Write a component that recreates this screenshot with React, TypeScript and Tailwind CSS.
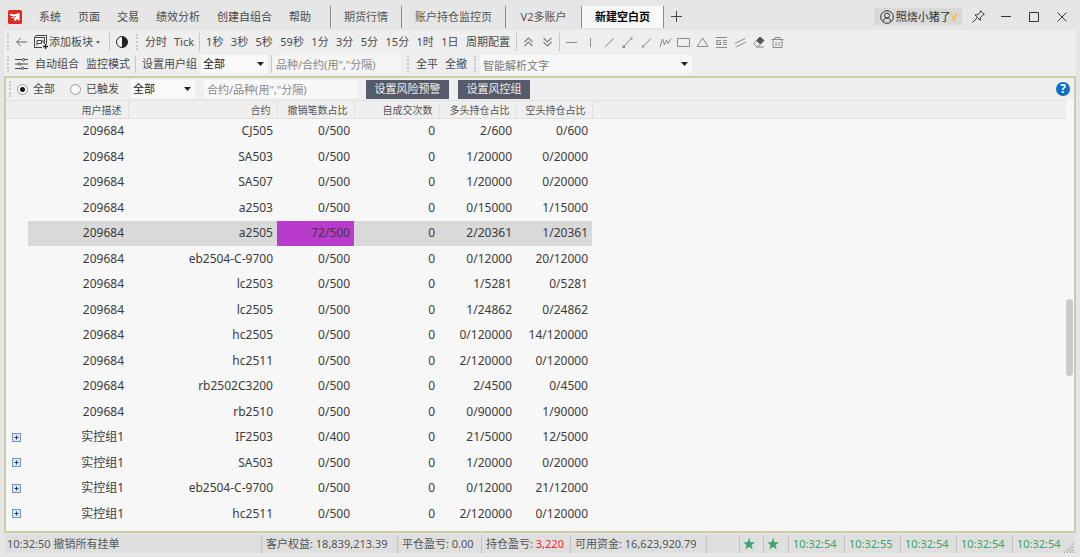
import { ReactNode, useState } from "react";
import clsx from "clsx";

type Row = {
  user: string
  contract: string
  cancel: string
  self: string
  long: string
  short: string
}

const menus = ["系统", "页面", "交易", "绩效分析", "创建自组合", "帮助"]

const tabs = [
  { label: "期货行情", width: "w-[71px]" },
  { label: "账户持仓监控页", width: "w-[104px]" },
  { label: "V2多账户", width: "w-[76px]" },
  { label: "新建空白页", width: "w-[83px]" },
]

const periods = ["1秒", "3秒", "5秒", "59秒", "1分", "3分", "5分", "15分", "1时", "1日", "周期配置"]

const columns = ["用户描述", "合约", "撤销笔数占比", "自成交次数", "多头持仓占比", "空头持仓占比"]

const data: Row[] = [
  ["209684", "CJ505", "0/500", "0", "2/600", "0/600"],
  ["209684", "SA503", "0/500", "0", "1/20000", "0/20000"],
  ["209684", "SA507", "0/500", "0", "1/20000", "0/20000"],
  ["209684", "a2503", "0/500", "0", "0/15000", "1/15000"],
  ["209684", "a2505", "72/500", "0", "2/20361", "1/20361"],
  ["209684", "eb2504-C-9700", "0/500", "0", "0/12000", "20/12000"],
  ["209684", "lc2503", "0/500", "0", "1/5281", "0/5281"],
  ["209684", "lc2505", "0/500", "0", "1/24862", "0/24862"],
  ["209684", "hc2505", "0/500", "0", "0/120000", "14/120000"],
  ["209684", "hc2511", "0/500", "0", "2/120000", "0/120000"],
  ["209684", "rb2502C3200", "0/500", "0", "2/4500", "0/4500"],
  ["209684", "rb2510", "0/500", "0", "0/90000", "1/90000"],
  ["实控组1", "IF2503", "0/400", "0", "21/5000", "12/5000"],
  ["实控组1", "SA503", "0/500", "0", "1/20000", "0/20000"],
  ["实控组1", "eb2504-C-9700", "0/500", "0", "0/12000", "21/12000"],
  ["实控组1", "hc2511", "0/500", "0", "2/120000", "0/120000"],
].map(([user, contract, cancel, self, long, short]) => ({ user, contract, cancel, self, long, short }))

const drawTools: { name: string; shape: ReactNode }[] = [
  { name: "水平线", shape: <path d="M1 6.500h11" /> },
  { name: "垂直线", shape: <path d="M6.500 2v9" /> },
  { name: "直线", shape: <path d="M2 11l9-9" /> },
  { name: "线段", shape: <><path d="M3 10.500l7-8" /><path d="M1.500 9.500h2.500V12H1.500zM9.500 1.500h2v2h-2z" fill="currentColor" stroke="none" /></> },
  { name: "射线", shape: <><path d="M3 10.500l8-8" /><path d="M2 9.500h2v2H2z" fill="currentColor" stroke="none" /></> },
  { name: "波浪线", shape: <path d="M1 11L3.500 3l2 6 2-5 1.500 3.500L12 2.500" /> },
  { name: "矩形", shape: <path d="M.5 2.500h12v8H.5z" /> },
  { name: "三角形", shape: <path d="M6.500 2L12 10.500H1z" /> },
  { name: "文字", shape: <><path d="M1 1.500h11M1 11.500h11M8 4.500h4M8 6.500h4M8 8.500h4" /><path d="M6 4.500H2v4h3.500V6.500H4" strokeWidth="1.200" /></> },
  { name: "平行线", shape: <path d="M1 7.500l10-5M2 11l10-5" /> },
  { name: "橡皮", shape: <><path d="M4.500 4.500L8 1l4 3.500L8.500 8z" fill="#555" stroke="#555" /><path d="M4.500 4.500L1.500 7.500 4.500 10.500h2l2-2.500M4 11h8" /></> },
  { name: "删除", shape: <path d="M.5 3.500h12M4 3.500v-2h5v2M2 4v7.500h9V4M5 6v4M8 6v4" /> },
]

const Grip = () => <span className="h-4 w-0.5 shrink-0 border-l-2 border-dotted border-[#cacaca]" />

const Divider = () => <span className="h-[18px] w-px shrink-0 bg-[#c6c6c6]" />

const Caret = () => (
  <svg className="pointer-events-none absolute right-1 top-[7px] h-1 w-[7px]" viewBox="0 0 7 4">
    <path d="M0 0h7L3.500 4z" fill="#222" />
  </svg>
)

const ToolButton = ({ children }: { children: ReactNode }) => (
  <button type="button" className="shrink-0 whitespace-nowrap hover:text-black">{children}</button>
)

const GroupSelect = ({ label, className }: { label: string; className: string }) => (
  <div className={clsx("relative shrink-0", className)}>
    <select aria-label={label} className="block h-[18px] w-full appearance-none bg-[#f9f9f9] pl-0.5 text-[11px] leading-[18px] text-[#222] outline-none">
      <option>全部</option>
    </select>
    <Caret />
  </div>
)

const TitleBar = () => {
  const [active, setActive] = useState("新建空白页")

  return (
    <header className="flex h-[30px] items-center pt-[3px]">
      <svg className="ml-2 h-3.5 w-3.5 shrink-0" viewBox="0 0 14 14">
        <rect width="14" height="14" rx="1.500" fill="#dd2a22" />
        <path d="M1.500 3.500l4.500 1L11.500 3v8L9 9 7 11.500 6 9 3.500 8z" fill="#fff" />
        <path d="M3 10.500l5-4.500M1.500 6.500h4" stroke="#dd2a22" />
      </svg>
      <nav className="ml-[17px] flex w-[291px] shrink-0 gap-[17px]">
        {menus.map((item) => <button type="button" key={item} className="whitespace-nowrap">{item}</button>)}
      </nav>
      <div className="flex h-[22px] shrink-0" role="tablist">
        {tabs.map(({ label, width }) => (
          <button
            type="button"
            role="tab"
            key={label}
            aria-selected={active === label}
            onClick={() => setActive(label)}
            className={clsx(
              "whitespace-nowrap border-l border-[#8c8c8c]",
              width,
              active === label ? "border-r bg-[#f8f8f8] font-bold text-black" : "text-[#555]",
            )}
          >
            {label}
          </button>
        ))}
      </div>
      <button type="button" aria-label="新建页面" className="ml-[7px]">
        <svg className="h-[11px] w-[11px]" viewBox="0 0 11 11" stroke="#444" fill="none"><path d="M5.500 0v11M0 5.500h11" /></svg>
      </button>
      <div className="ml-auto flex shrink-0 items-center pr-[13px] text-[#333]">
        <button type="button" className="flex h-[17px] items-center bg-[#d9d9d9] pl-1.5 pr-1 leading-[17px]">
          <svg className="mr-0.5 h-3.5 w-3.5" viewBox="0 0 14 14" fill="none" stroke="currentColor">
            <circle cx="7" cy="7" r="6.300" />
            <circle cx="7" cy="5.500" r="2.500" />
            <path d="M3.500 11.500c0-2.500 1.500-3.500 3.500-3.500s3.500 1 3.500 3.500" />
          </svg>
          照烧小猪了<span className="font-bold text-[#efc24c]">V</span>
        </button>
        <button type="button" aria-label="置顶" className="ml-2.5">
          <svg className="h-[13px] w-[13px]" viewBox="0 0 13 13" fill="none" stroke="currentColor">
            <path d="M8.500.700l3.800 3.800-1.300.300-2.500 2.500-.3 3L3 5l3-.3 2.300-2.500zM5.500 7.500L.5 12.500" />
          </svg>
        </button>
        <button type="button" aria-label="最小化" className="ml-4">
          <svg className="h-2.5 w-2.5" viewBox="0 0 10 10" stroke="currentColor"><path d="M0 4.500h10" /></svg>
        </button>
        <button type="button" aria-label="最大化" className="ml-[18px]">
          <svg className="h-2.5 w-2.5" viewBox="0 0 10 10" fill="none" stroke="currentColor"><path d="M.5.5h9v9h-9z" /></svg>
        </button>
        <button type="button" aria-label="关闭" className="ml-[18px]">
          <svg className="h-2.5 w-2.5" viewBox="0 0 10 10" stroke="currentColor"><path d="M.5.5l9 9M9.500.5l-9 9" /></svg>
        </button>
      </div>
    </header>
  )
}

const ChartToolbar = () => (
  <div className="flex h-6 items-center pl-[3px]">
    <Grip />
    <button type="button" aria-label="返回" className="ml-[7px]">
      <svg className="h-2.5 w-[11px]" viewBox="0 0 11 10" fill="none" stroke="#666"><path d="M11 5H.7M4.700 1l-4 4 4 4" /></svg>
    </button>
    <button type="button" className="ml-[7px] flex w-[75px] shrink-0 items-center whitespace-nowrap">
      <svg className="mr-px h-3.5 w-3.5" viewBox="0 0 14 14" fill="none" stroke="#444">
        <path d="M.5 12.500v-10l1.500-2h10.500v8.500M.5 2.500h10V9M.5 12.500H8" />
        <path d="M3 10.500v-5h4.500v3H3M9 5v3" />
        <path d="M11.500 9v5M9 11.500h5" strokeWidth="1.300" stroke="#222" />
      </svg>
      添加板块
      <svg className="ml-[3px] h-[3px] w-1" viewBox="0 0 4 3"><path d="M0 0h4L2 3z" fill="#666" /></svg>
    </button>
    <Divider />
    <button type="button" aria-label="切换主题" className="ml-1.5">
      <svg className="h-3 w-3" viewBox="0 0 12 12"><circle cx="6" cy="6" r="5.500" fill="#f8f8f8" stroke="#222" /><path d="M6 .5a5.500 5.500 0 0 1 0 11z" fill="#222" /></svg>
    </button>
    <div className="ml-2 flex shrink-0 items-center gap-[7px]">
      <Grip />
      <ToolButton>分时</ToolButton>
      <ToolButton>Tick</ToolButton>
    </div>
    <span className="ml-[5px] flex"><Divider /></span>
    <div className="ml-1.5 mr-1.5 flex w-[304px] shrink-0 justify-between">
      {periods.map((item) => <ToolButton key={item}>{item}</ToolButton>)}
    </div>
    <Divider />
    <div className="flex w-[42px] shrink-0 justify-between px-[7px] text-[#808080]">
      <button type="button" aria-label="上移">
        <svg className="h-2.5 w-[9px]" viewBox="0 0 9 10" fill="none" stroke="currentColor" strokeWidth="1.200"><path d="M.5 5l4-4 4 4M.5 9l4-4 4 4" /></svg>
      </button>
      <button type="button" aria-label="下移">
        <svg className="h-2.5 w-[9px]" viewBox="0 0 9 10" fill="none" stroke="currentColor" strokeWidth="1.200"><path d="M.5 1l4 4 4-4M.5 5l4 4 4-4" /></svg>
      </button>
    </div>
    <Divider />
    <div className="ml-[5px] flex w-[219px] shrink-0 justify-between text-[#8a8a8a]">
      {drawTools.map(({ name, shape }) => (
        <button type="button" key={name} aria-label={name}>
          <svg className="h-[13px] w-[13px]" viewBox="0 0 13 13" fill="none" stroke="currentColor">{shape}</svg>
        </button>
      ))}
    </div>
  </div>
)

const TradeToolbar = () => (
  <div className="flex h-[22px] items-center pb-0.5 pl-[3px]">
    <Grip />
    <button type="button" aria-label="设置" className="ml-1.5">
      <svg className="h-3 w-[13px]" viewBox="0 0 13 12" fill="none" stroke="#444">
        <path d="M0 1.500h7M10 1.500h3M0 6h3M6 6h7M0 10.500h6M9 10.500h4" />
        <circle cx="8.500" cy="1.700" r="1.200" /><circle cx="4.500" cy="6" r="1.200" /><circle cx="7.500" cy="10.300" r="1.200" />
      </svg>
    </button>
    <div className="ml-[7px] mr-[5px] flex gap-[7px]">
      <ToolButton>自动组合</ToolButton>
      <ToolButton>监控模式</ToolButton>
    </div>
    <Divider />
    <span className="ml-1.5 mr-1 shrink-0">设置用户组</span>
    <GroupSelect label="设置用户组" className="w-[67px]" />
    <span className="ml-[3px] mr-px flex"><Divider /></span>
    <input aria-label="品种合约" placeholder={'品种/合约(用","分隔)'} className="h-[18px] w-[128px] shrink-0 bg-[#f5f5f5] pl-[3px] outline-none placeholder:text-[#888]" />
    <div className="ml-1.5 flex shrink-0 items-center gap-[7px]">
      <Grip />
      <ToolButton>全平</ToolButton>
      <ToolButton>全撤</ToolButton>
      <Grip />
    </div>
    <div className="relative ml-1 w-[212px] shrink-0">
      <input aria-label="智能解析文字" placeholder="智能解析文字" className="block h-[18px] w-full bg-[#f8f8f8] pl-[3px] pt-0.5 outline-none placeholder:text-[#777]" />
      <Caret />
    </div>
  </div>
)

const FilterBar = () => {
  const [scope, setScope] = useState("全部")

  return (
    <div className="flex h-[22px] shrink-0 items-center pl-[3px]">
      <Grip />
      {["全部", "已触发"].map((item, i) => (
        <label key={item} className={clsx("flex shrink-0 items-center gap-[5px]", i === 0 ? "ml-1.5" : "ml-[15px]")}>
          <input
            type="radio"
            name="scope"
            checked={scope === item}
            onChange={() => setScope(item)}
            className="h-[11px] w-[11px] appearance-none rounded-full border border-[#999] bg-[#fafafa] bg-[radial-gradient(circle,#111_2px,transparent_3px)] [&:not(:checked)]:bg-none"
          />
          {item}
        </label>
      ))}
      <GroupSelect label="触发类型" className="ml-3 w-16" />
      <input aria-label="合约品种" placeholder={'合约/品种(用","分隔)'} className="ml-[9px] h-[18px] w-[153px] shrink-0 bg-[#f8f8f8] pl-[3px] outline-none placeholder:text-[#888]" />
      <button type="button" className="ml-[9px] h-[19px] w-[83px] shrink-0 bg-[#555b6b] text-[#f0f0f0]">设置风险预警</button>
      <button type="button" className="ml-[9px] h-[19px] w-[72px] shrink-0 bg-[#555b6b] text-[#f0f0f0]">设置风控组</button>
      <button type="button" aria-label="帮助" className="ml-auto mr-1 flex h-3.5 w-3.5 items-center justify-center rounded-full bg-[#0b6fc7] text-xs font-bold leading-[14px] text-white">?</button>
    </div>
  )
}

const RiskTable = () => (
  <div className="flex min-h-0 grow bg-[#f7f7f7]">
    <table className="w-full table-fixed self-start border-collapse text-right text-xs leading-4 text-[#3c3c3c]">
      <colgroup>
        <col className="w-[22px]" />
        <col className="w-[100px]" />
        <col className="w-[149px]" />
        <col className="w-[77px]" />
        <col className="w-[85px]" />
        <col className="w-[77px]" />
        <col className="w-[76px]" />
        <col />
      </colgroup>
      <thead>
        <tr className="h-[18px] border-y border-[#e0e0e0] bg-[#efefef] text-[10px] text-[#555]">
          <th />
          {columns.map((name) => (
            <th key={name} scope="col" className="whitespace-nowrap border-r border-[#e0e0e0] p-0 pr-1.5 font-normal">{name}</th>
          ))}
          <th />
        </tr>
      </thead>
      <tbody>
        {data.map((row, i) => {
          const selected = row.contract === "a2505"
          const cell = clsx("p-0 pr-1", selected && "bg-[#d9d9d9]")
          return (
            <tr key={i} className="h-[25px] even:h-[26px]">
              <td className="p-0 pl-1.5 text-left">
                {row.user.startsWith("实控组") && (
                  <button type="button" aria-label="展开" className="block">
                    <svg className="h-[9px] w-[9px]" viewBox="0 0 9 9" fill="none">
                      <rect x=".5" y=".5" width="8" height="8" fill="#dbe6f3" stroke="#7d92b3" />
                      <path d="M4.500 2.500v4M2.500 4.500h4" stroke="#1f3d73" />
                    </svg>
                  </button>
                )}
              </td>
              <td className={cell}>{row.user}</td>
              <td className={cell}>{row.contract}</td>
              <td className={selected ? "bg-[#b93bcb] p-0 pr-1" : cell}>{row.cancel}</td>
              <td className={cell}>{row.self}</td>
              <td className={cell}>{row.long}</td>
              <td className={cell}>{row.short}</td>
              <td />
            </tr>
          )
        })}
      </tbody>
    </table>
    <div className="w-2 shrink-0">
      <div className="mt-[199px] h-[77px] w-[7px] rounded-full bg-[#cbcbcb]" />
    </div>
  </div>
)

const Star = () => (
  <svg className="h-3 w-3" viewBox="0 0 12 12"><path d="M6 0l1.500 4.200H12L8.400 7l1.400 4.500L6 8.800l-3.800 2.700L3.600 7 0 4.200h4.500z" fill="#3aa36b" /></svg>
)

const StatusBar = () => (
  <footer className="mx-[5px] mt-0.5 flex h-[18px] items-center bg-[#dfdfdf] leading-[18px] text-[#555]">
    <span className="w-[256px] shrink-0 pl-0.5">10:32:50 撤销所有挂单</span>
    <span className="w-[136px] shrink-0 border-l border-[#c2c2c2] pl-1">客户权益: 18,839,213.39</span>
    <span className="w-[84px] shrink-0 border-l border-[#c2c2c2] pl-1">平仓盈亏: 0.00</span>
    <span className="w-[89px] shrink-0 border-l border-[#c2c2c2] pl-1">持仓盈亏: <span className="text-[#f02828]">3,220</span></span>
    <span className="w-[137px] shrink-0 border-x border-[#c2c2c2] pl-1">可用资金: 16,623,920.79</span>
    <div className="ml-auto flex h-full shrink-0 text-[#3aa36b]">
      <span className="flex w-6 items-center border-l border-[#c2c2c2] pl-[3px]"><Star /></span>
      <span className="flex w-[25px] items-center border-l border-[#c2c2c2] pl-[3px]"><Star /></span>
      {["10:32:54", "10:32:55", "10:32:54", "10:32:54", "10:32:54"].map((time, i) => (
        <span key={i} className="w-14 border-l border-[#c2c2c2] pl-1 last:w-[52px]">{time}</span>
      ))}
    </div>
    <svg className="mr-px h-2.5 w-2.5 shrink-0 self-end" viewBox="0 0 10 10" stroke="#aaa"><path d="M0 10L10 0M3 10l7-7M6 10l4-4M8.500 10l1.500-1.500" /></svg>
  </footer>
)

export default function App() {
  return (
    <div className="flex min-h-screen flex-col bg-[#e6e6e6] pb-1 font-['Noto_Sans','Noto_Sans_CJK_SC',sans-serif] text-[11px] leading-4 text-[#4a4a4a]">
      <TitleBar />
      <div className="mx-1 bg-[#eee]">
        <ChartToolbar />
        <TradeToolbar />
      </div>
      <main className="mx-1 flex grow flex-col border-2 border-[#cccda6] bg-[#efefef]">
        <FilterBar />
        <RiskTable />
      </main>
      <StatusBar />
    </div>
  )
}
